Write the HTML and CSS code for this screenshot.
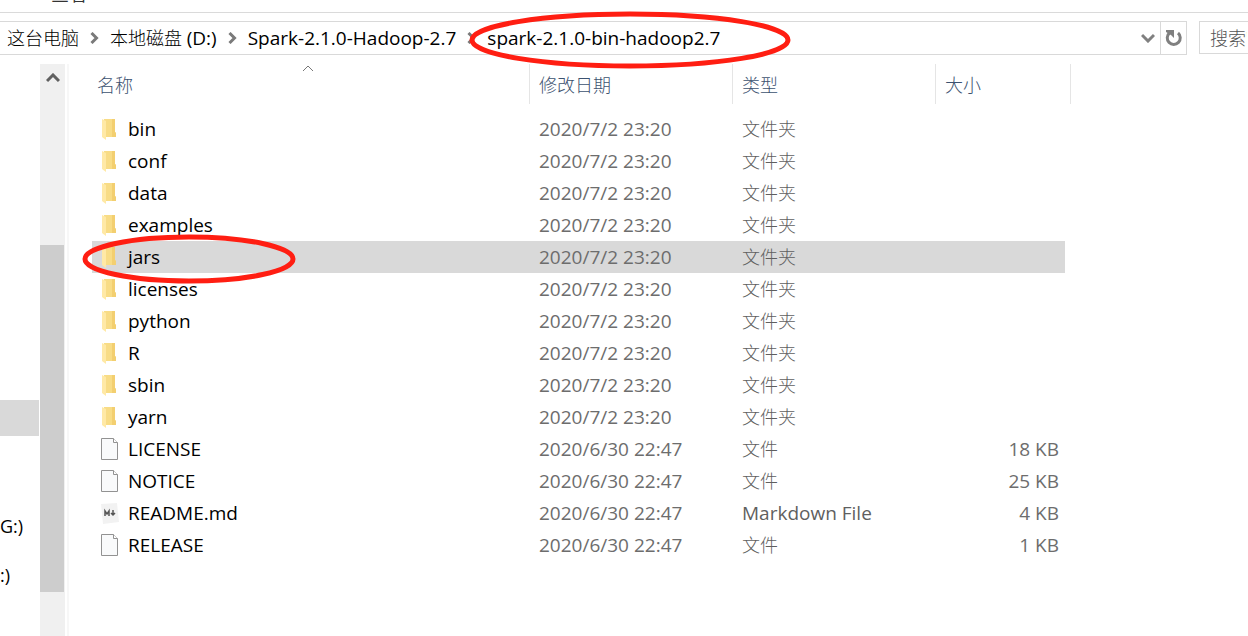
FILE: index.html
```
<!DOCTYPE html>
<html lang="zh-CN">
<head>
    <meta charset="UTF-8">
    <meta name="viewport" content="width=device-width, initial-scale=1.0">
    <title>spark-2.1.0-bin-hadoop2.7</title>
    <link rel="stylesheet" href="styles.css">
</head>
<body>
    <div class="ribbon">
        <a href="#" class="tab">查看</a>
    </div>

    <div class="toolbar">
        <nav class="address">
            <a href="#">这台电脑</a>
            <svg class="sep" viewBox="0 0 8 12"><path d="M1 1l5 5-5 5"/></svg>
            <a href="#">本地磁盘 <span class="latin">(D:)</span></a>
            <svg class="sep" viewBox="0 0 8 12"><path d="M1 1l5 5-5 5"/></svg>
            <a href="#" class="latin">Spark-2.1.0-Hadoop-2.7</a>
            <svg class="sep" viewBox="0 0 8 12"><path d="M1 1l5 5-5 5"/></svg>
            <a href="#" class="latin current">spark-2.1.0-bin-hadoop2.7
                <svg class="mark mark-path" viewBox="0 0 322 58"><ellipse cx="161" cy="29" rx="158" ry="26"/></svg>
            </a>
            <button type="button" class="history" aria-label="以前的位置">
                <svg width="14" height="10" viewBox="0 0 14 10"><path d="M1 2l6 6 6-6"/></svg>
            </button>
            <button type="button" class="refresh" aria-label="刷新">
                <svg width="18" height="18" viewBox="0 0 18 18">
                    <path d="M13 4a6.500 6.500 0 1 1-8.500 0"/>
                    <path class="head" d="M1 1h8v8L6 6 1 3z"/>
                </svg>
            </button>
        </nav>
        <input type="text" class="search" placeholder="搜索&quot;spark-2.1.0&quot;" aria-label="搜索">
    </div>

    <div class="content">
        <nav class="tree">
            <a href="#" class="selected" aria-label="当前文件夹"></a>
            <a href="#" class="drive">G:)</a>
            <a href="#" class="drive last">:)</a>
        </nav>
        <div class="scrollbar">
            <button type="button" aria-label="向上滚动">
                <svg width="14" height="10" viewBox="0 0 14 10"><path d="M1 8l6-6 6 6"/></svg>
            </button>
            <div class="thumb"></div>
        </div>

        <main>
            <table>
                <thead>
                    <tr>
                        <th class="name">名称
                            <svg class="sort" viewBox="0 0 12 7"><path d="M1 6l5-5 5 5"/></svg>
                        </th>
                        <th class="date">修改日期</th>
                        <th class="type">类型</th>
                        <th class="size">大小</th>
                    </tr>
                </thead>
                <tbody id="files"></tbody>
            </table>
        </main>
    </div>

    <script>
        const files = [
            ['bin', '2020/7/2 23:20', 'folder'],
            ['conf', '2020/7/2 23:20', 'folder'],
            ['data', '2020/7/2 23:20', 'folder'],
            ['examples', '2020/7/2 23:20', 'folder'],
            ['jars', '2020/7/2 23:20', 'folder'],
            ['licenses', '2020/7/2 23:20', 'folder'],
            ['python', '2020/7/2 23:20', 'folder'],
            ['R', '2020/7/2 23:20', 'folder'],
            ['sbin', '2020/7/2 23:20', 'folder'],
            ['yarn', '2020/7/2 23:20', 'folder'],
            ['LICENSE', '2020/6/30 22:47', 'file', '18 KB'],
            ['NOTICE', '2020/6/30 22:47', 'file', '25 KB'],
            ['README.md', '2020/6/30 22:47', 'markdown', '4 KB'],
            ['RELEASE', '2020/6/30 22:47', 'file', '1 KB']
        ];

        const types = {
            folder: '文件夹',
            file: '文件',
            markdown: '<span class="latin">Markdown File</span>'
        };

        const icons = {
            folder: `<svg class="icon" viewBox="0 0 18 24">
                <path fill="#f8dc86" d="M3 2h11v13l1 1v4H3z"/>
                <path fill="#f3cf70" d="M11 2h3v13l1 1v4h-4z"/>
                <path fill="#ffe9a6" d="M1 2l4 2v19l-4-3z"/>
            </svg>`,
            file: `<svg class="icon" viewBox="0 0 18 24">
                <path fill="#f9fafb" stroke="#929292" d="M.5 1.500h12l4 4v17H.5z"/>
                <path fill="#fff" stroke="#929292" d="M12.500 1.500v4h4"/>
            </svg>`,
            markdown: `<svg class="icon" viewBox="0 0 18 24">
                <path fill="#f2f2f2" d="M0 3l16-1 2 19-16 2z"/>
                <path fill="none" stroke="#555" stroke-width="1.500" d="M4 15v-5l2 3 2-3v5M12 9v5M10 12l2 2 2-2"/>
            </svg>`
        };

        const mark = '<svg class="mark mark-row" viewBox="0 0 214 50"><ellipse cx="107" cy="25" rx="104" ry="22"/></svg>';

        document.getElementById('files').innerHTML = files.map(([name, date, type, size]) => `
            <tr class="${name === 'jars' ? 'selected' : ''}">
                <td class="name"><div class="file">${icons[type]}<span>${name}</span>${name === 'jars' ? mark : ''}</div></td>
                <td class="date latin">${date}</td>
                <td class="type">${types[type]}</td>
                <td class="size latin">${size || ''}</td>
            </tr>
        `).join('');
    </script>
</body>
</html>
```
FILE: styles.css
```
* {
    box-sizing: border-box;
}

body {
    font-family: "Open Sans", "Noto Sans CJK SC", sans-serif;
    font-size: 18px;
    font-weight: 300;
    color: #000;
    background: #fff;
    margin: 0;
    height: 100vh;
    display: flex;
    flex-direction: column;
    overflow: hidden;
}

a {
    color: inherit;
    text-decoration: none;
}

button {
    background: none;
    border: none;
    padding: 0;
    display: flex;
    align-items: center;
    justify-content: center;
}

svg {
    flex: none;
}

.latin {
    font-size: 19px;
    font-weight: 400;
}

.ribbon {
    height: 13px;
    border-bottom: 1px solid #dadada;
    display: flex;
    align-items: flex-end;
    overflow: hidden;
    padding-left: 51px;
}

.tab {
    line-height: 24px;
    padding-bottom: 6px;
    color: #333;
    font-weight: 400;
}

.toolbar {
    display: flex;
    gap: 12px;
    margin-top: 8px;
}

.address {
    flex: 1;
    height: 34px;
    border: 1px solid #d9d9d9;
    border-left: none;
    display: flex;
    align-items: center;
    gap: 11px;
    padding-left: 7px;
    line-height: 32px;
    white-space: nowrap;
}

.sep {
    width: 9px;
    height: 12px;
}

.sep path,
.history path,
.scrollbar path {
    fill: none;
    stroke: #7a7a7a;
    stroke-width: 3;
}

.current {
    position: relative;
}

.history {
    margin-left: auto;
}

.history path {
    stroke: #808080;
}

.history + .refresh {
    margin-left: -6px;
}

.refresh {
    width: 26px;
    height: 32px;
    border-left: 1px solid #d9d9d9;
}

.refresh path {
    fill: none;
    stroke: #808080;
    stroke-width: 3;
}

.refresh .head {
    fill: #808080;
    stroke: none;
}

.search {
    width: 49px;
    height: 33px;
    border: 1px solid #d9d9d9;
    border-right: none;
    padding: 0 1px 0 10px;
    font: inherit;
}

.search::placeholder {
    color: #555;
    opacity: 1;
}

.content {
    flex: 1;
    display: flex;
    margin-top: 9px;
}

.tree {
    width: 40px;
    padding: 336px 1px 0 0;
    overflow: hidden;
    font-weight: 400;
}

.tree a {
    display: block;
    height: 36px;
    line-height: 36px;
}

.tree .selected {
    background: #d9d9d9;
}

.tree .drive {
    margin-top: 72px;
}

.tree .last {
    margin-top: 13px;
}

.scrollbar {
    width: 25px;
    background: #f0f0f0;
}

.scrollbar button {
    width: 25px;
    height: 28px;
}

.scrollbar path {
    stroke: #606060;
}

.thumb {
    width: 24px;
    height: 347px;
    margin-top: 153px;
    background: #cdcdcd;
}

main {
    flex: 1;
    margin-left: 2px;
    padding-left: 23px;
    border-left: 2px solid #f7f7f7;
}

table {
    width: 973px;
    table-layout: fixed;
    border-collapse: separate;
    border-spacing: 0;
}

th {
    position: relative;
    height: 40px;
    padding: 0 9px;
    border-right: 1px solid #e5e5e5;
    color: #3c5270;
    font-weight: 300;
    text-align: left;
}

th.name {
    width: 438px;
    padding-left: 5px;
}

th.date,
th.type {
    width: 203px;
}

/* the last divider stands a little outside the rows */
th.size {
    border-right: none;
}

th.size::after {
    content: "";
    position: absolute;
    top: 0;
    right: -6px;
    width: 1px;
    height: 40px;
    background: #e5e5e5;
}

.sort {
    position: absolute;
    top: 1px;
    left: 50%;
    width: 12px;
    height: 7px;
    margin-left: -9px;
}

.sort path {
    fill: none;
    stroke: #777;
}

tbody::before {
    content: "";
    display: block;
    height: 9px;
}

td {
    height: 32px;
    padding: 0 9px;
    color: #6d6d6d;
    line-height: 32px;
    white-space: nowrap;
}

td.type {
    color: #5f5f5f;
}

td.size {
    padding-right: 6px;
    text-align: right;
}

tr.selected td {
    background: #d9d9d9;
}

.file {
    position: relative;
    display: flex;
    align-items: center;
    gap: 9px;
    height: 32px;
    color: #000;
    font-size: 19px;
    font-weight: 400;
}

.icon {
    width: 18px;
    height: 24px;
}

.mark {
    position: absolute;
    z-index: 1;
    pointer-events: none;
}

.mark ellipse {
    fill: none;
    stroke: #ff1e12;
    stroke-width: 5;
}

.mark-path {
    top: -11px;
    left: -18px;
    width: 322px;
    height: 58px;
}

.mark-row {
    top: -7px;
    left: -19px;
    width: 214px;
    height: 50px;
}
```
